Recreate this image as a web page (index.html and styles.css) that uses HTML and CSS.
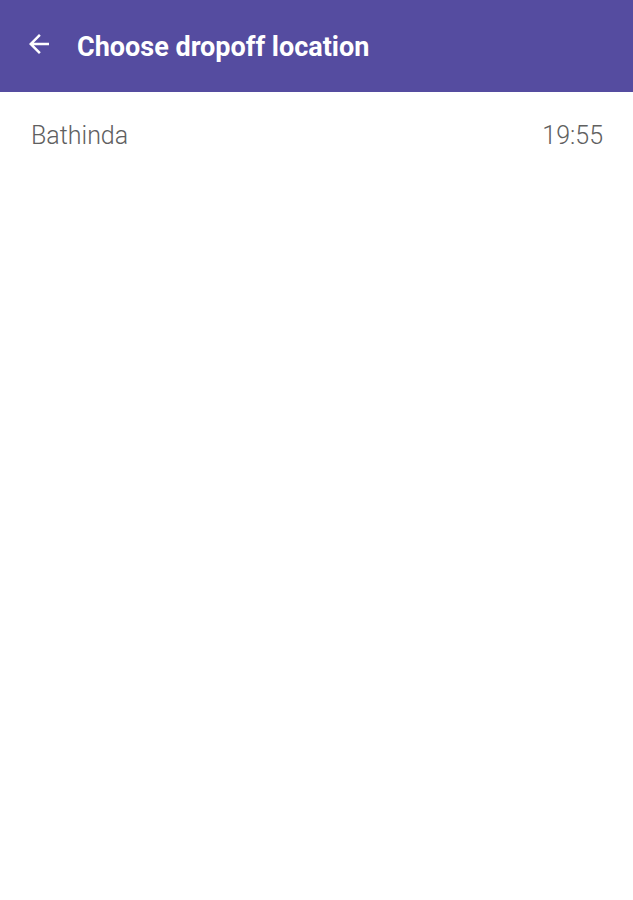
FILE: index.html
```html
<!DOCTYPE html>
<html>
<head>
    <title>Choose dropoff location</title>
    <meta name="viewport" content="width=device-width, initial-scale=1.0">
    <link rel="stylesheet" href="styles.css">
</head>
<body>
    <div class="toolbar">
        <button class="back-btn" aria-label="Back">
            <svg width="30" height="30" viewBox="0 0 24 24"><path d="M20 11H7.83l5.59-5.59L12 4l-8 8 8 8 1.41-1.41L7.83 13H20v-2z" fill="#fff"/></svg>
        </button>
        <h1>Choose dropoff location</h1>
    </div>

    <ul class="stop-list">
        <li class="stop">
            <span class="stop-name">Bathinda</span>
            <span class="stop-time">19:55</span>
        </li>
    </ul>
</body>
</html>
```

FILE: styles.css
```css
:root {
    --primary-color: #554ca0;
    --text-color: #606060;
}
body {
    font-family: Roboto, 'Noto Sans', sans-serif;
    background-color: #ffffff;
    margin: 0;
}
.toolbar {
    display: flex;
    align-items: center;
    height: 92px;
    background-color: var(--primary-color);
    padding: 0 0 0 24px;
    box-sizing: border-box;
}
.back-btn {
    background: none;
    border: none;
    padding: 0;
    width: 30px;
    height: 30px;
    display: flex;
    align-items: center;
    justify-content: center;
    margin-right: 23px;
    margin-top: -4px;
}
h1 {
    color: #ffffff;
    font-size: 27px;
    font-weight: 700;
    margin: 0;
    margin-top: 2px;
}
.stop-list {
    list-style: none;
    margin: 0;
    padding: 0;
}
.stop {
    display: flex;
    justify-content: space-between;
    align-items: center;
    padding: 0 30px 0 31px;
    height: 86px;
    color: var(--text-color);
    font-size: 25px;
    font-weight: 300;
}
```
